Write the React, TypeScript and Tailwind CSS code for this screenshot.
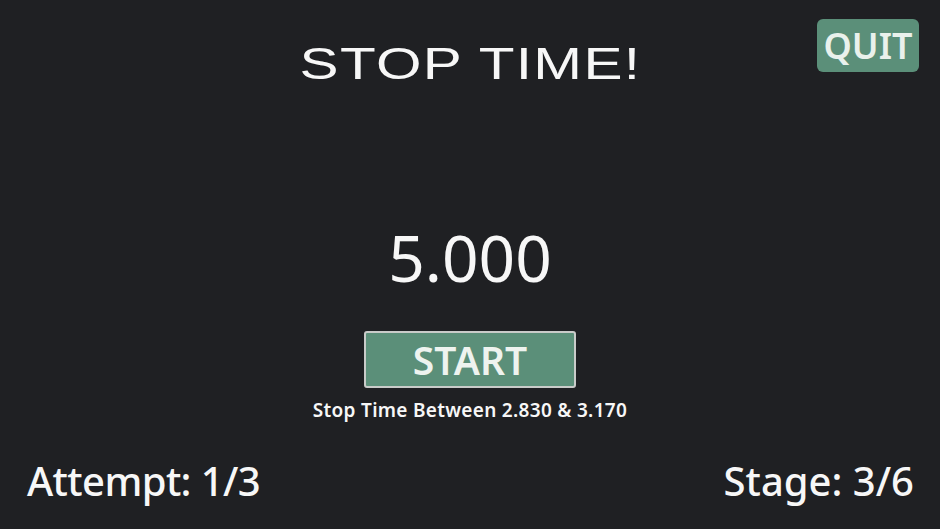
import React from "react";

export default function App() {
  return (
    <div
      className="w-full h-[529px] bg-[#1f2023] flex flex-col text-[#f7f7f7] overflow-hidden"
      style={{ fontFamily: '"Noto Sans", sans-serif' }}
    >
      <div className="grid grid-cols-[1fr_auto_1fr] items-start pt-[19px]">
        <div />
        <div
          className="mt-[23px] h-[44px] text-[44px] leading-none whitespace-nowrap flex justify-center"
          style={{ fontFamily: '"Liberation Sans", sans-serif' }}
        >
          <span className="inline-block scale-x-[1.33] tracking-[1px]">STOP TIME!</span>
        </div>
        <div className="flex justify-end pr-[21px]">
          <button className="w-[102px] h-[53px] rounded-[6px] bg-[#5b8f79] text-[#e9f1ec] text-[36px] font-semibold leading-none flex items-center justify-center">
            QUIT
          </button>
        </div>
      </div>

      <div className="mt-[140px] text-center text-[64px] leading-none">5.000</div>

      <div className="mt-[41px] flex justify-center">
        <button className="w-[212px] h-[57px] rounded-[3px] border-2 border-[#c9cbc9] bg-[#5b8f79] text-[#eef3ef] text-[39px] font-semibold leading-none flex items-center justify-center">
          START
        </button>
      </div>

      <div className="mt-[13px] text-center text-[19px] tracking-[0.3px] font-semibold leading-none">
        Stop Time Between 2.830 &amp; 3.170
      </div>

      <div className="mt-[41px] flex justify-between pl-[27px] pr-[26px] text-[40px] font-medium leading-none">
        <span className="tracking-[-0.6px]">Attempt: 1/3</span>
        <span>Stage: 3/6</span>
      </div>
    </div>
  );
}
